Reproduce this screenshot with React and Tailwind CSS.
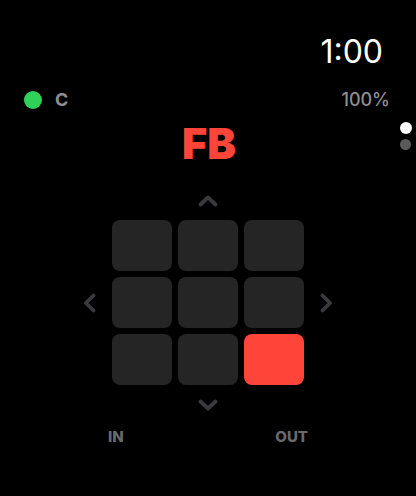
import { useState } from 'react';

const TILES = [0, 1, 2, 3, 4, 5, 6, 7, 8];

function Chevron({ dir }) {
  // Small stroked chevrons around the pad.
  const vertical = dir === 'up' || dir === 'down';
  const pts = {
    up: '2.5,9.5 10,2.5 17.5,9.5',
    down: '2.5,2.5 10,9.5 17.5,2.5',
    left: '10.5,2.5 3,10 10.5,17.5',
    right: '2.5,2.5 10,10 2.5,17.5',
  }[dir];
  return (
    <svg
      width={vertical ? 20 : 13}
      height={vertical ? 12 : 20}
      viewBox={vertical ? '0 0 20 12' : '0 0 13 20'}
      fill="none"
      stroke="#3a3a3c"
      strokeWidth={3.8}
      strokeLinecap="round"
      strokeLinejoin="round"
    >
      <polyline points={pts} />
    </svg>
  );
}

export default function App() {
  const [active, setActive] = useState(8);

  return (
    <div className="relative w-[416px] h-[496px] bg-black overflow-hidden font-['Inter','Noto_Sans',sans-serif]">
      <div className="flex justify-end pr-[33px] mt-[36px] h-[32px] text-[32px] leading-[32px] text-white">
        1:00
      </div>

      <div className="flex items-center justify-between mt-[23px] h-[18px] pl-[24px] pr-[26px]">
        <div className="flex items-center gap-[13px]">
          <span className="w-[18px] h-[18px] rounded-full bg-[#30d158]" />
          <span className="text-[18px] leading-[18px] font-bold text-[#8e8e93]">C</span>
        </div>
        <span className="text-[18px] leading-[18px] font-medium text-[#8e8e93]">100%</span>
      </div>

      <div className="absolute top-[122px] left-[400px] flex flex-col gap-[5px]">
        <span className="w-[12px] h-[12px] rounded-full bg-white" />
        <span className="w-[11px] h-[11px] rounded-full bg-[#5a5a5a]" />
      </div>

      <div className="flex flex-col items-center">
        <div className="mt-[13px] h-[43px] text-[43px] leading-[43px] font-black text-[#ff453a] pl-[2px]">
          FB
        </div>

        <div className="mt-[30px]">
          <Chevron dir="up" />
        </div>

        <div className="flex items-center mt-[13px] gap-[16px]">
          <Chevron dir="left" />
          <div className="grid grid-cols-3 gap-[6px]">
            {TILES.map((i) => (
              <button
                key={i}
                type="button"
                onClick={() => setActive(i)}
                className={
                  'w-[60px] h-[51px] rounded-[8px] ' +
                  (i === active ? 'bg-[#ff453a]' : 'bg-[#252525]')
                }
              />
            ))}
          </div>
          <Chevron dir="right" />
        </div>

        <div className="mt-[14px]">
          <Chevron dir="down" />
        </div>

        <div className="flex justify-between w-[200px] mt-[18px] text-[15px] leading-[15px] font-extrabold text-[#6a6a6a]">
          <span>IN</span>
          <span>OUT</span>
        </div>
      </div>
    </div>
  );
}
